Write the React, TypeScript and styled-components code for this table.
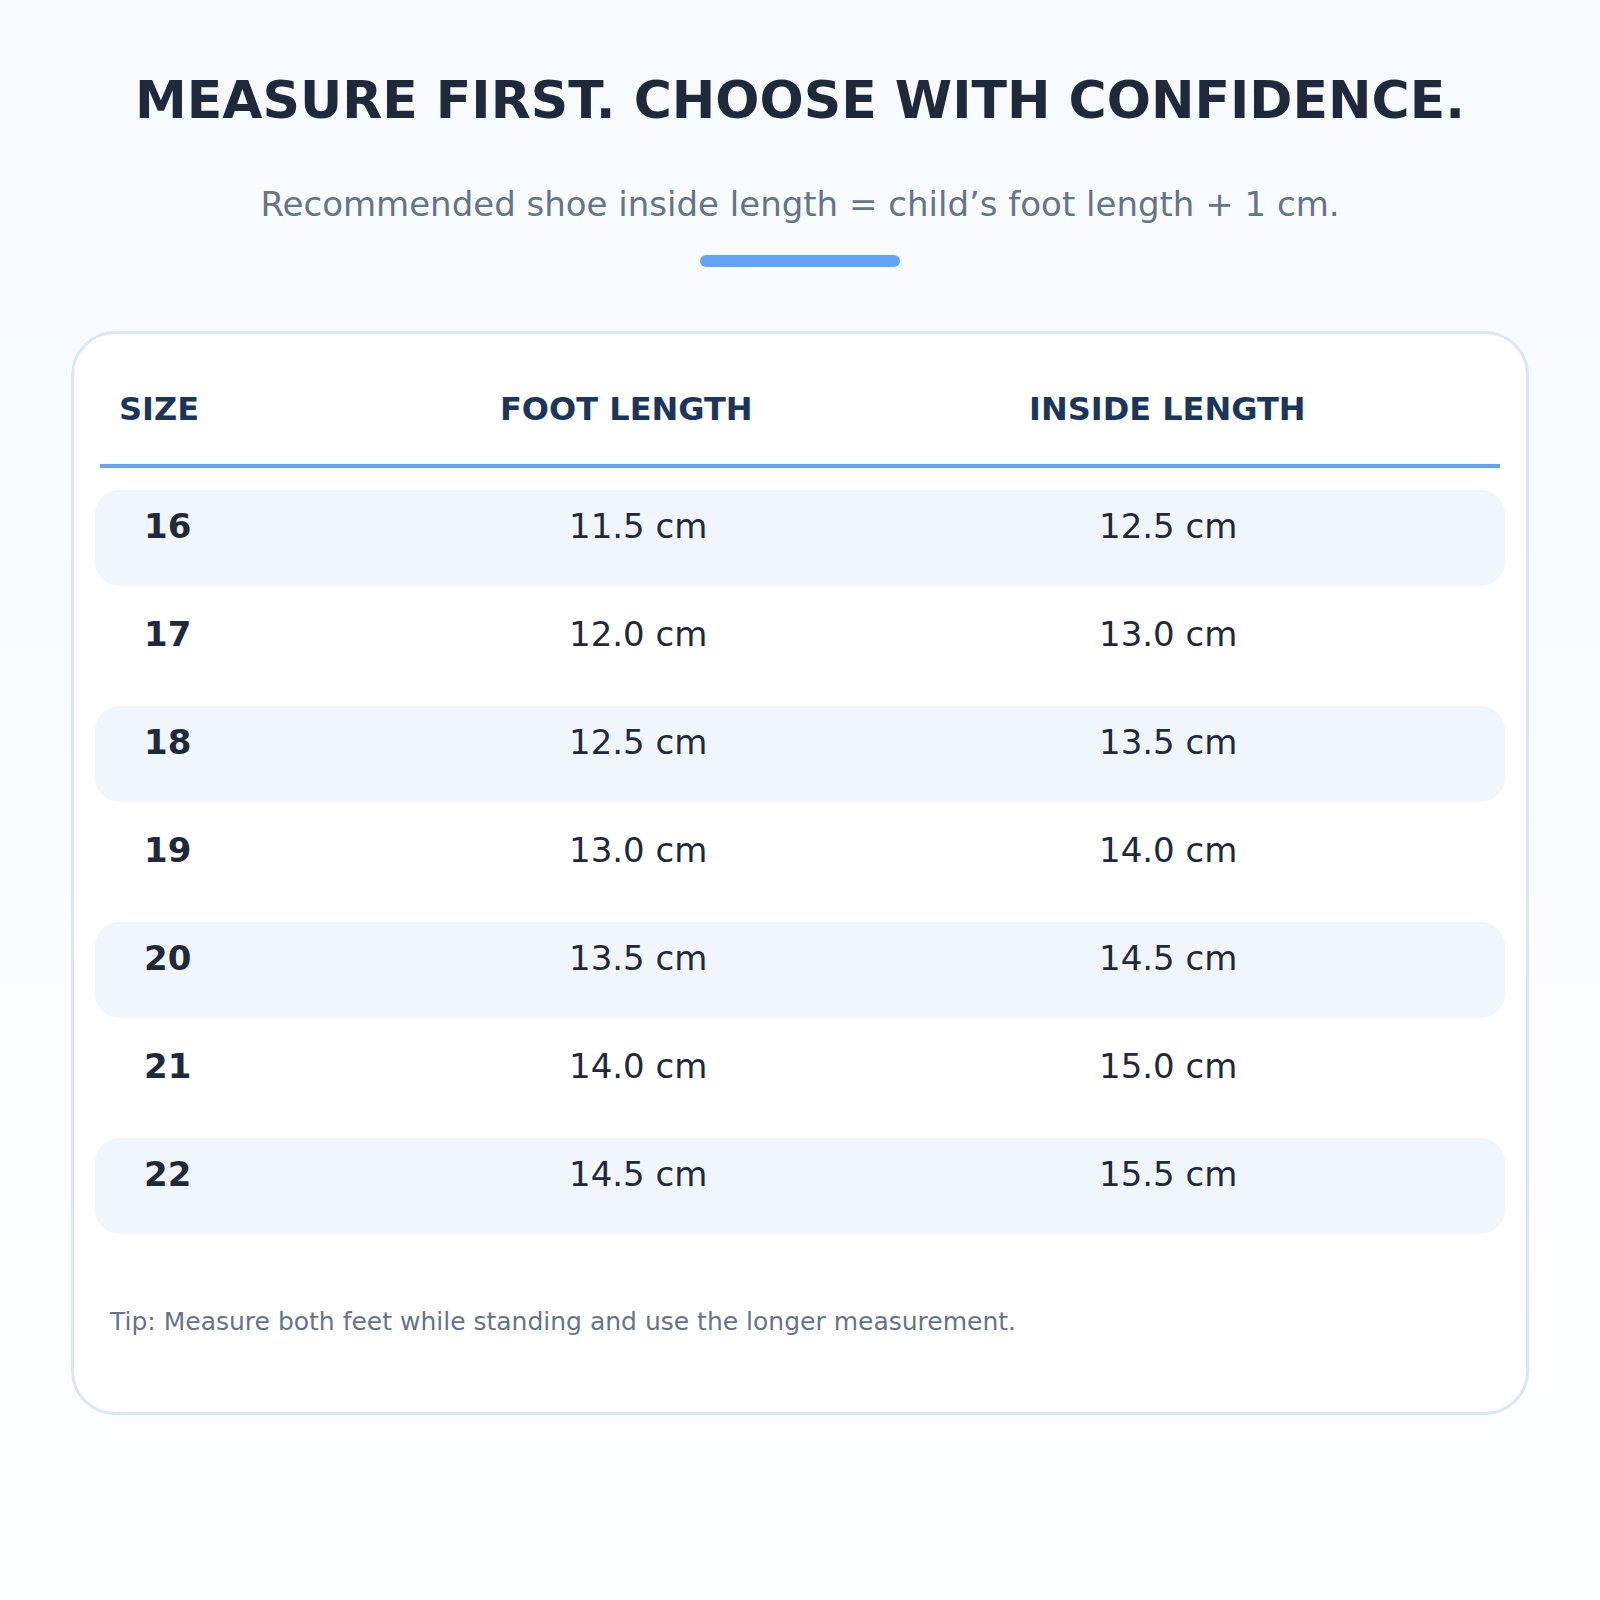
import React from "react";
import styled, { createGlobalStyle } from "styled-components";

const Global = createGlobalStyle`
  html, body { margin: 0; padding: 0; }
  body {
    background: linear-gradient(180deg, #f7fbff 0%, #fdfeff 100%);
    min-height: 1600px;
    font-family: "DejaVu Sans", Verdana, sans-serif;
  }
`;

const Page = styled.main`
  width: 1600px;
  min-height: 1600px;
  box-sizing: border-box;
  padding-top: 69px;
  display: flex;
  flex-direction: column;
  align-items: center;
`;

const Title = styled.h1`
  margin: 0;
  font-size: 52px;
  line-height: 62.4px;
  font-weight: 700;
  color: #1e293b;
  letter-spacing: 0;
  text-align: center;
`;

const Subtitle = styled.p`
  margin: 53px 0 0;
  font-size: 34px;
  line-height: 40.8px;
  color: #64748b;
  text-align: center;
`;

const Accent = styled.div`
  margin-top: 30px;
  width: 200px;
  height: 12px;
  border-radius: 6px;
  background: #60a5fa;
`;

const Card = styled.section`
  margin-top: 64px;
  width: 1458px;
  box-sizing: border-box;
  background: #ffffff;
  border: 3px solid #dbe7f7;
  border-radius: 44px;
  padding: 56px 21px 75px;
  display: flex;
  flex-direction: column;
`;

const HeaderRow = styled.div`
  display: grid;
  grid-template-columns: 381px 529px 1fr;
  padding-left: 24px;
  font-size: 32px;
  line-height: 38.4px;
  font-weight: 700;
  color: #1b365d;
`;

const Separator = styled.div`
  margin: 35px 5px 22px;
  height: 4px;
  background: #60a5fa;
`;

const Rows = styled.div`
  display: flex;
  flex-direction: column;
  gap: 12px;
`;

const Row = styled.div<{ $striped: boolean }>`
  display: grid;
  grid-template-columns: 425px 530px 1fr;
  height: 96px;
  box-sizing: border-box;
  padding: 15px 0 0 49px;
  border-radius: 24px;
  background: ${(p) => (p.$striped ? "#f1f6fd" : "transparent")};
  font-size: 34px;
  line-height: 42px;
  color: #1e293b;
`;

const Cell = styled.span<{ $bold?: boolean }>`
  font-weight: ${(p) => (p.$bold ? 700 : 400)};
`;

const Tip = styled.p`
  margin: 73px 0 0 15px;
  font-size: 25px;
  line-height: 30px;
  color: #64748b;
`;

const data = [
  ["16", "11.5 cm", "12.5 cm"],
  ["17", "12.0 cm", "13.0 cm"],
  ["18", "12.5 cm", "13.5 cm"],
  ["19", "13.0 cm", "14.0 cm"],
  ["20", "13.5 cm", "14.5 cm"],
  ["21", "14.0 cm", "15.0 cm"],
  ["22", "14.5 cm", "15.5 cm"],
];

export default function App() {
  return (
    <>
      <Global />
      <Page>
        <Title>MEASURE FIRST. CHOOSE WITH CONFIDENCE.</Title>
        <Subtitle>Recommended shoe inside length = child’s foot length + 1 cm.</Subtitle>
        <Accent />
        <Card>
          <HeaderRow>
            <span>SIZE</span>
            <span>FOOT LENGTH</span>
            <span>INSIDE LENGTH</span>
          </HeaderRow>
          <Separator />
          <Rows>
            {data.map((r, i) => (
              <Row key={r[0]} $striped={i % 2 === 0}>
                <Cell $bold>{r[0]}</Cell>
                <Cell>{r[1]}</Cell>
                <Cell>{r[2]}</Cell>
              </Row>
            ))}
          </Rows>
          <Tip>Tip: Measure both feet while standing and use the longer measurement.</Tip>
        </Card>
      </Page>
    </>
  );
}
